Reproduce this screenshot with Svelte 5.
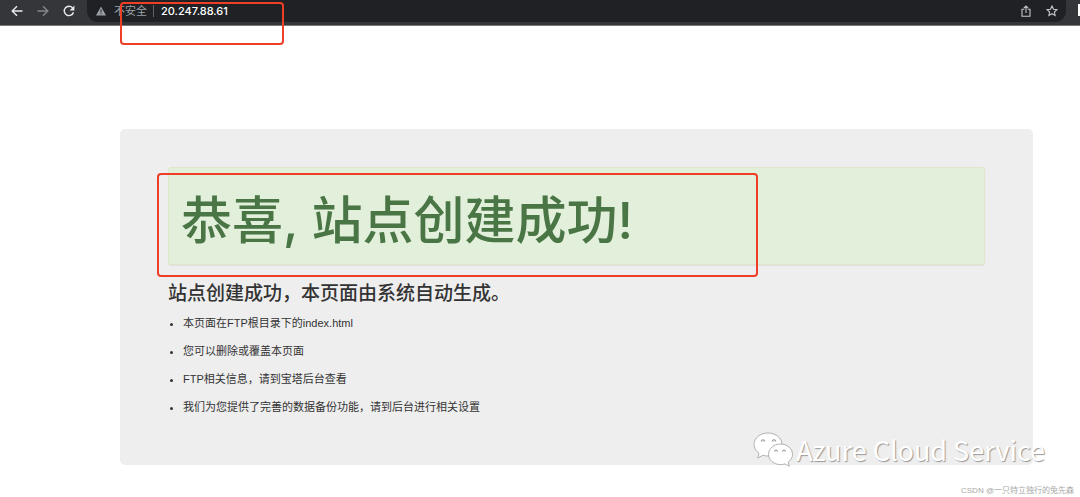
<script>
  const notes = [
    '本页面在FTP根目录下的index.html',
    '您可以删除或覆盖本页面',
    'FTP相关信息，请到宝塔后台查看',
    '我们为您提供了完善的数据备份功能，请到后台进行相关设置'
  ];
  let address = $state('20.247.88.61');
</script>

<div class="page">
  <header class="toolbar">
    <nav class="nav">
      <button aria-label="返回">
        <svg width="12" height="12" viewBox="0 0 12 12"><path d="M11.500 6H1.500M6 1.200 1.200 6 6 10.800" /></svg>
      </button>
      <button class="dim" aria-label="前进">
        <svg width="12" height="12" viewBox="0 0 12 12"><path d="M.5 6h10M6 1.200 10.800 6 6 10.800" /></svg>
      </button>
      <button aria-label="重新加载">
        <svg width="12" height="12" viewBox="0 0 12 12"><path d="M10.500 7.200A4.700 4.700 0 1 1 9.600 2.900" /><path class="solid" d="M11.400.6v4.800H6.600z" /></svg>
      </button>
    </nav>
    <div class="omnibox">
      <button class="security">
        <svg width="10" height="10" viewBox="0 0 10 10"><path fill="#9aa0a6" d="M5 .4 10 9.400H0z" /><path stroke="#202124" stroke-width="1" d="M5 3.400v3M5 7.300v1" /></svg>
        <span>不安全</span>
      </button>
      <input aria-label="地址" bind:value={address} spellcheck="false" />
      <button class="act" aria-label="分享">
        <svg width="12" height="12" viewBox="0 0 12 12"><path d="M4.200 4.200H2v7h8v-7H7.800M6 8V1.200M3.800 3.200 6 1l2.200 2.200" /></svg>
      </button>
      <button class="act" aria-label="收藏">
        <svg width="12" height="12" viewBox="0 0 12 12"><path d="m6 1 1.500 3.200 3.500.4-2.600 2.400.7 3.500L6 8.700l-3.100 1.800.7-3.500L1 4.600l3.500-.4z" /></svg>
      </button>
    </div>
    <span class="edge"></span>
  </header>

  <main>
    <section class="panel">
      <div class="alert"><h1>恭喜, 站点创建成功!</h1></div>
      <h2>站点创建成功，本页面由系统自动生成。</h2>
      <ul>
        {#each notes as note}
          <li>{note}</li>
        {/each}
      </ul>
    </section>
  </main>

  <div class="mark mark-address"></div>
  <div class="mark mark-title"></div>

  <div class="brand">
    <svg width="40" height="36" viewBox="0 0 40 36">
      <g fill="#fff" stroke="#a0a0a0" stroke-width=".8">
        <path d="M15 1C7.200 1 1 6 1 12.500c0 3.600 2 6.700 5 8.800L4.600 26l5.200-2.700c1.700.5 3.400.7 5.200.7 7.800 0 14-5 14-11.500S22.800 1 15 1z" />
        <path d="M27.500 12C20.800 12 15.500 16.600 15.500 22.300s5.300 10.300 12 10.300c1.600 0 3.100-.2 4.400-.7l4.500 2.400-1.200-4.100c2.700-1.900 4.300-4.700 4.300-7.900C39.500 16.600 34.200 12 27.500 12z" />
      </g>
      <g fill="#ddd" stroke="#8c8c8c" stroke-width=".9">
        <path d="M8.200 9.500a1.800 1.800 0 0 1 3.600 0M19.200 9.500a1.800 1.800 0 0 1 3.600 0M21.500 19.500a1.500 1.500 0 0 1 3 0M29.500 19.500a1.500 1.500 0 0 1 3 0" />
      </g>
    </svg>
    <span>Azure Cloud Service</span>
  </div>
  <small class="credit">CSDN @一只特立独行的兔先森</small>
</div>

<style>
  :global(body) {
    margin: 0;
    background: #fff;
  }
  .page {
    position: relative;
    min-height: 100vh;
    overflow: hidden;
    box-sizing: border-box;
    color: #333;
    font-family: "Liberation Sans", "Noto Sans CJK SC", sans-serif;
  }
  button {
    display: flex;
    align-items: center;
    padding: 0;
    border: 0;
    background: none;
    color: inherit;
    font: inherit;
  }
  .toolbar {
    display: flex;
    height: 26px;
    box-sizing: border-box;
    background: #35363a;
    border-bottom: 1px solid #77787a;
  }
  .nav {
    display: flex;
    align-items: center;
    gap: 14px;
    height: 21px;
    padding: 0 12px 0 11px;
    color: #e8eaed;
  }
  .nav .dim {
    color: #85868a;
  }
  .nav svg,
  .act svg {
    fill: none;
    stroke: currentColor;
    stroke-width: 1.4;
  }
  .act svg {
    stroke-width: 1.1;
  }
  .nav .solid {
    fill: currentColor;
    stroke: none;
  }
  .omnibox {
    display: flex;
    flex: 1;
    align-items: center;
    gap: 14px;
    height: 22px;
    padding: 0 8px 0 9px;
    box-sizing: border-box;
    background: #202124;
    border-radius: 0 0 11px 11px;
    color: #c4c7cb;
    font-size: 11px;
  }
  .security {
    gap: 8px;
    margin-right: -7px;
    padding-right: 6px;
    border-right: 1px solid #5f6368;
    color: #9aa0a6;
    line-height: 12px;
  }
  input {
    flex: 1;
    min-width: 0;
    padding: 0;
    border: 0;
    outline: 0;
    background: none;
    color: #fff;
    font: 500 11px Inter, sans-serif;
  }
  .edge {
    width: 2px;
    height: 12px;
    margin: 4px 0 0 12px;
    background: #fff;
  }
  main {
    padding: 103px 47px 32px 120px;
  }
  .panel {
    padding: 38px 48px 44px;
    background: #eee;
    border-radius: 5px;
  }
  .alert {
    padding: 17px 12px 7px;
    border: 1px solid #dde8cb;
    border-radius: 3px;
    background: #e1efdb;
    box-shadow: 0 1px 1px rgba(0, 0, 0, 0.06);
  }
  h1 {
    margin: 0;
    color: #4a7645;
    font: 500 51px/72px Inter, "Noto Sans CJK SC", sans-serif;
  }
  h2 {
    margin: 13px 0 3px;
    font: 500 19px/28px "Noto Sans CJK SC", sans-serif;
  }
  ul {
    margin: 0;
    padding: 0 0 0 15px;
    font-size: 11px;
    line-height: 28px;
  }
  .mark {
    position: absolute;
    box-sizing: border-box;
    border: 2px solid #ee3f26;
    border-radius: 4px;
    pointer-events: none;
  }
  .mark-address {
    left: 120px;
    top: 2px;
    width: 164px;
    height: 43px;
  }
  .mark-title {
    left: 157px;
    top: 173px;
    width: 601px;
    height: 104px;
  }
  .brand {
    position: absolute;
    right: 35px;
    bottom: 29px;
    display: flex;
    align-items: center;
    gap: 3px;
    color: #fff;
    font: 400 27px/36px "Noto Sans CJK SC", sans-serif;
    text-shadow: 1px 1px 1px #999;
    white-space: nowrap;
  }
  .credit {
    position: absolute;
    right: 6px;
    bottom: 0;
    color: #a8a8a8;
    font-size: 8px;
    line-height: 12px;
  }
</style>
